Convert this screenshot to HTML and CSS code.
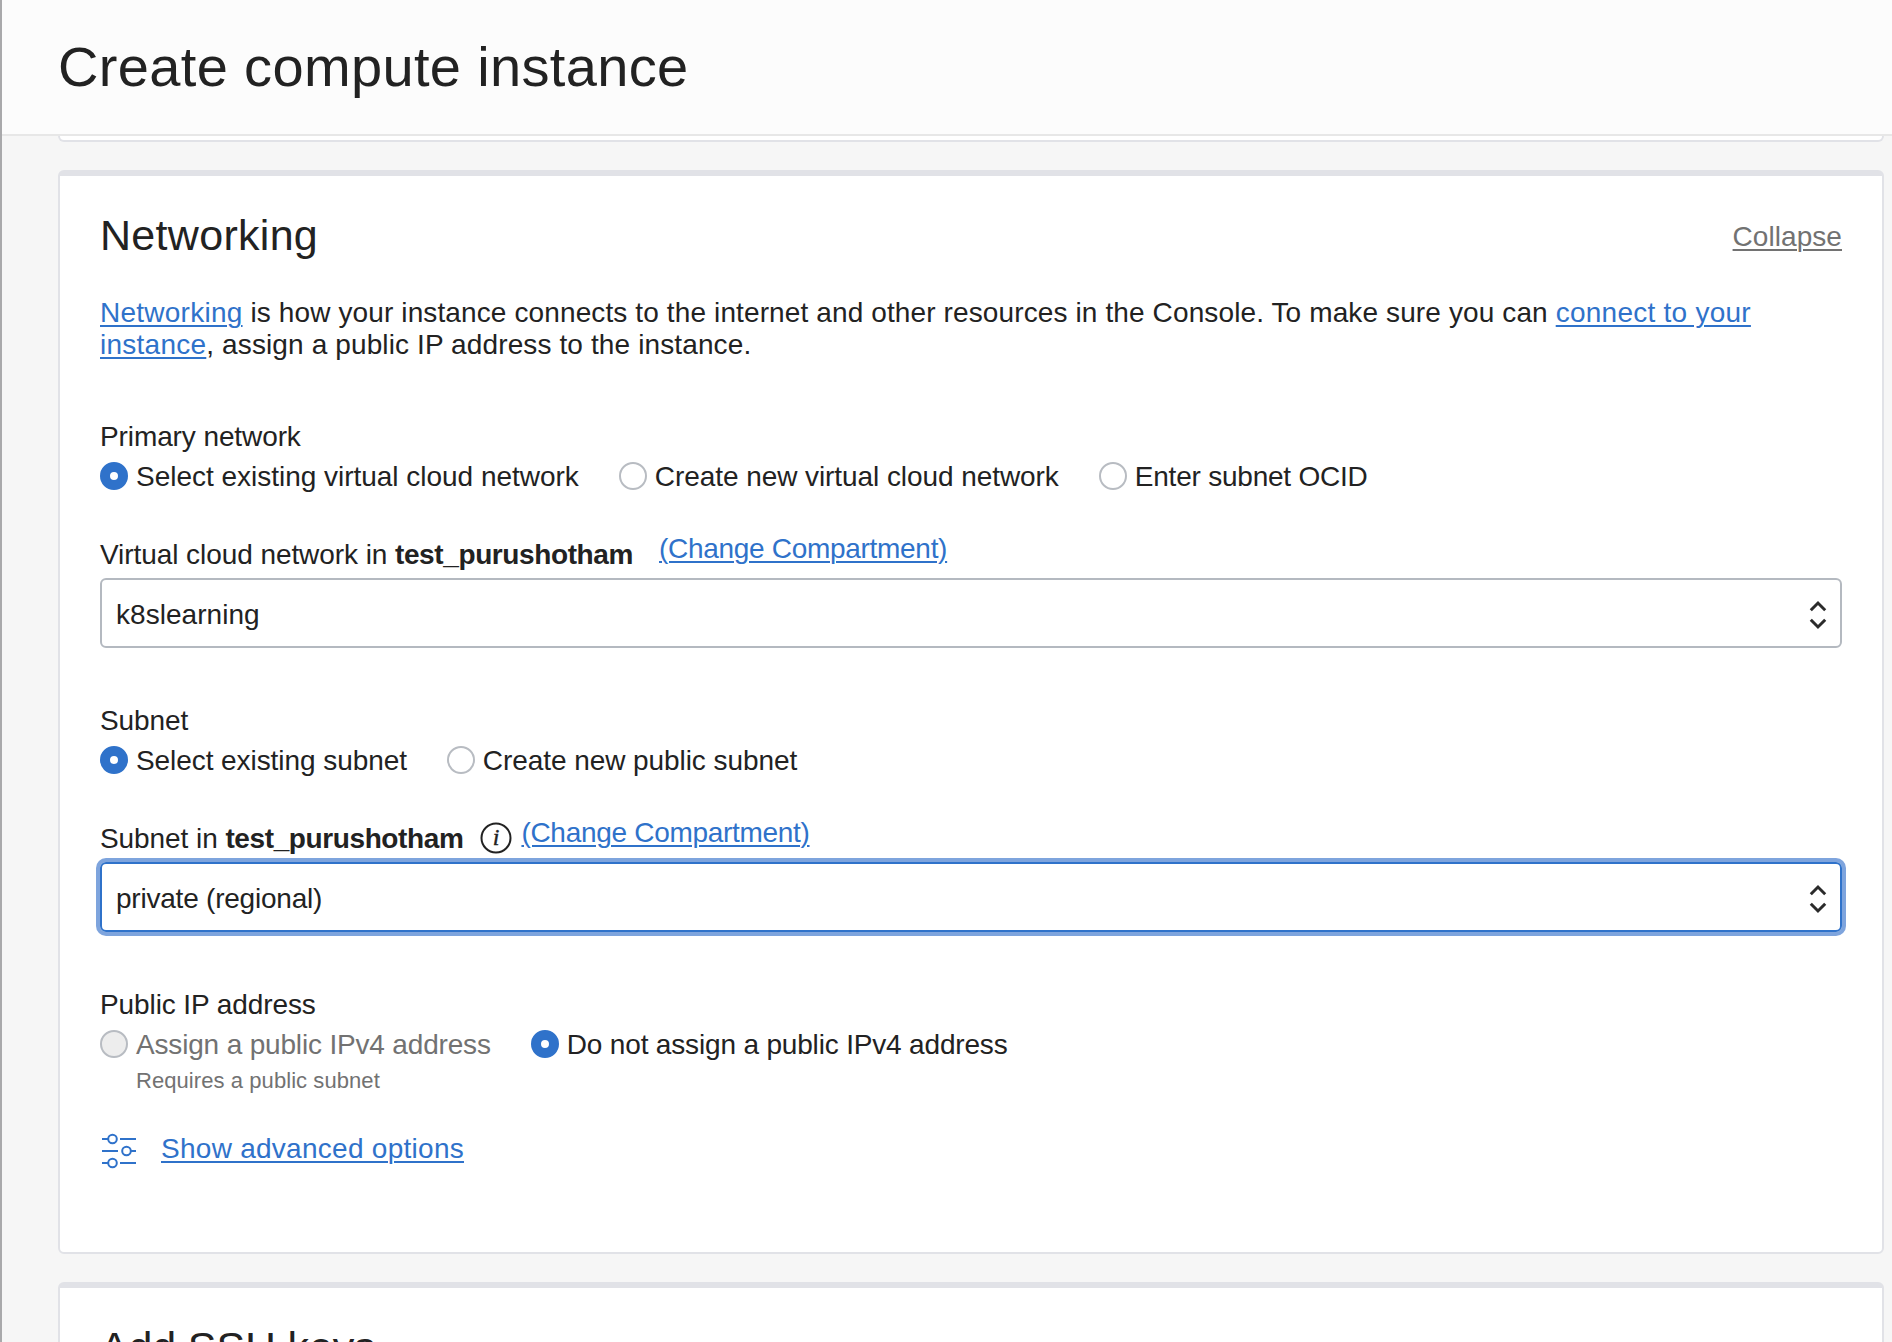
FILE: index.html
```
<!DOCTYPE html>
<html lang="en">
<head>
<meta charset="utf-8">
<title>Create compute instance</title>
<link rel="stylesheet" href="styles.css">
</head>
<body>
<div class="panel">
  <header class="panel-header">
    <h1 class="panel-title">Create compute instance</h1>
  </header>
  <main class="panel-body">
    <section class="card card-previous"></section>

    <section class="card card-networking">
      <div class="card-head">
        <h2 class="card-title">Networking</h2>
        <a class="collapse" href="#">Collapse</a>
      </div>
      <p class="intro"><a class="intro-link" href="#">Networking</a> is how your instance connects to the internet and other resources in the Console. To make sure you can <a class="intro-link" href="#">connect to your<br>instance</a>, assign a public IP address to the instance.</p>

      <fieldset class="group">
        <legend class="label">Primary network</legend>
        <div class="radios">
          <label class="radio"><span class="dot dot-on"></span><span class="t-even">Select existing virtual cloud network</span></label>
          <label class="radio"><span class="dot"></span><span class="t-tight">Create new virtual cloud network</span></label>
          <label class="radio"><span class="dot"></span><span class="t-tightest">Enter subnet OCID</span></label>
        </div>
        <div class="field-head">
          <span class="field-label">Virtual cloud network in <strong>test_purushotham</strong></span>
          <a class="change change-vcn" href="#">(Change Compartment)</a>
        </div>
        <div class="select">
          <span class="t-wide">k8slearning</span>
          <svg class="chevrons" width="18" height="30" viewBox="0 0 18 30" fill="none" stroke="#2b2b2b" stroke-width="3"><path d="M1.8 10.2 9 3l7.2 7.2M1.8 19.8 9 27l7.2-7.2"/></svg>
        </div>
      </fieldset>

      <fieldset class="group">
        <legend class="label">Subnet</legend>
        <div class="radios">
          <label class="radio"><span class="dot dot-on"></span><span class="t-tight">Select existing subnet</span></label>
          <label class="radio"><span class="dot"></span><span class="t-tight">Create new public subnet</span></label>
        </div>
        <div class="field-head">
          <span class="field-label">Subnet in <strong>test_purushotham</strong></span>
          <svg class="info" width="32" height="32" viewBox="0 0 32 32"><circle cx="16" cy="16" r="14.5" fill="none" stroke="#222" stroke-width="2"/><text x="16" y="23" text-anchor="middle" class="info-letter">i</text></svg>
          <a class="change change-subnet" href="#">(Change Compartment)</a>
        </div>
        <div class="select select-focus">
          <span class="t-tightest">private (regional)</span>
          <svg class="chevrons" width="18" height="30" viewBox="0 0 18 30" fill="none" stroke="#2b2b2b" stroke-width="3"><path d="M1.8 10.2 9 3l7.2 7.2M1.8 19.8 9 27l7.2-7.2"/></svg>
        </div>
      </fieldset>

      <fieldset class="group">
        <legend class="label">Public IP address</legend>
        <div class="radios">
          <label class="radio radio-disabled"><span class="dot dot-disabled"></span><span class="t-tighter">Assign a public IPv4 address</span></label>
          <label class="radio"><span class="dot dot-on"></span><span class="t-tighter">Do not assign a public IPv4 address</span></label>
        </div>
        <p class="hint">Requires a public subnet</p>
      </fieldset>

      <div class="advanced">
        <svg width="34" height="36" viewBox="0 0 34 36" fill="none" stroke="#2f72ca" stroke-width="2"><path d="M0 6h6M18 6h16M0 18h16M29 18h5M0 30h6M18 30h16"/><circle cx="10.5" cy="6" r="4.3"/><circle cx="24.5" cy="18" r="4.3"/><circle cx="10.5" cy="30" r="4.3"/></svg>
        <a class="advanced-link" href="#">Show advanced options</a>
      </div>
    </section>

    <section class="card card-keys">
      <h2 class="card-title">Add SSH keys</h2>
    </section>
  </main>
</div>
</body>
</html>
```
FILE: styles.css
```
* { box-sizing: border-box; }

html, body { height: 100%; }

body {
  margin: 0;
  overflow: hidden;
  font: 28px/32px "Liberation Sans", Arial, sans-serif;
  color: #222;
  background: #f6f6f6;
}

h1, h2, p, fieldset { margin: 0; padding: 0; border: 0; }

a {
  color: #2f72ca;
  text-decoration: underline;
  text-decoration-thickness: 2px;
  text-underline-offset: 3px;
}

.panel {
  height: 100%;
  display: flex;
  flex-direction: column;
  border-left: 2px solid #a9a9ab;
}

.panel-header {
  flex: none;
  height: 136px;
  padding: 35px 56px 0;
  background: #fcfcfc;
  border-bottom: 2px solid #e7e7e7;
}

.panel-title {
  font-size: 56px;
  line-height: 64px;
  font-weight: 400;
  letter-spacing: 0.35px;
}

.panel-body {
  flex: 1;
  min-height: 0;
  overflow: hidden;
  display: flex;
  flex-direction: column;
  gap: 28px;
  padding: 0 8px 0 56px;
}

.card {
  flex: none;
  background: #fff;
  border: 2px solid #e1e2e7;
  border-top-width: 6px;
  border-radius: 6px;
  padding: 35px 40px 0;
}

.card-previous {
  height: 6px;
  padding: 0;
  border-top: 0;
  border-radius: 0 0 6px 6px;
}

.card-networking { height: 1084px; }
.card-keys { height: 200px; }

.card-head {
  display: flex;
  justify-content: space-between;
}

.card-title {
  font-size: 43px;
  line-height: 48px;
  font-weight: 400;
  letter-spacing: 0.3px;
}

.card-keys .card-title { letter-spacing: -0.15px; }

.collapse {
  margin-top: 10px;
  color: #727272;
  letter-spacing: 0.06px;
}

.intro {
  margin-top: 38px;
  letter-spacing: 0.12px;
  white-space: nowrap;
}

.intro-link { letter-spacing: 0.25px; }

.group { margin-top: 57px; }
.intro + .group { margin-top: 60px; }

.label {
  display: block;
  padding: 0;
  letter-spacing: -0.1px;
}

.radios {
  display: flex;
  gap: 40px;
  margin-top: 8px;
}

.radio {
  display: flex;
  gap: 8px;
}

.dot {
  width: 28px;
  height: 28px;
  margin-top: 1px;
  border: 2px solid #b8bcc2;
  border-radius: 50%;
  background: #fff;
}

.dot-on { border: 10px solid #2f72ca; }
.dot-disabled { background: #ededed; }
.radio-disabled { color: #727272; }

.t-even { letter-spacing: -0.02px; }
.t-tight { letter-spacing: -0.07px; }
.t-tighter { letter-spacing: -0.17px; }
.t-tightest { letter-spacing: -0.22px; }
.t-wide { letter-spacing: 0.04px; }

.field-head {
  display: flex;
  height: 38px;
  margin: 40px 0 7px;
}

.field-label {
  padding-top: 6px;
  letter-spacing: -0.07px;
}

.field-label strong { letter-spacing: -0.39px; }
.change { letter-spacing: -0.3px; }
.change-vcn { margin-left: 26px; }
.change-subnet { margin-left: 9px; }

.info {
  margin: 5px 0 0 17px;
}

.info-letter {
  font: italic 24px "Liberation Serif", serif;
  fill: #222;
  stroke: #222;
  stroke-width: 0.4px;
}

.select {
  display: flex;
  align-items: center;
  justify-content: space-between;
  height: 70px;
  padding: 3px 13px 0 14px;
  border: 2px solid #b4b9c0;
  border-radius: 6px;
}

.select-focus {
  border-color: #2f72ca;
  box-shadow: 0 0 0 4px #7ea4dd;
}

.hint {
  margin-top: 4px;
  padding-left: 36px;
  font-size: 22px;
  letter-spacing: 0.07px;
  color: #727272;
}

.advanced {
  display: flex;
  align-items: flex-start;
  gap: 25px;
  padding: 36px 0 0 2px;
}

.advanced-link { letter-spacing: 0.27px; }
```
